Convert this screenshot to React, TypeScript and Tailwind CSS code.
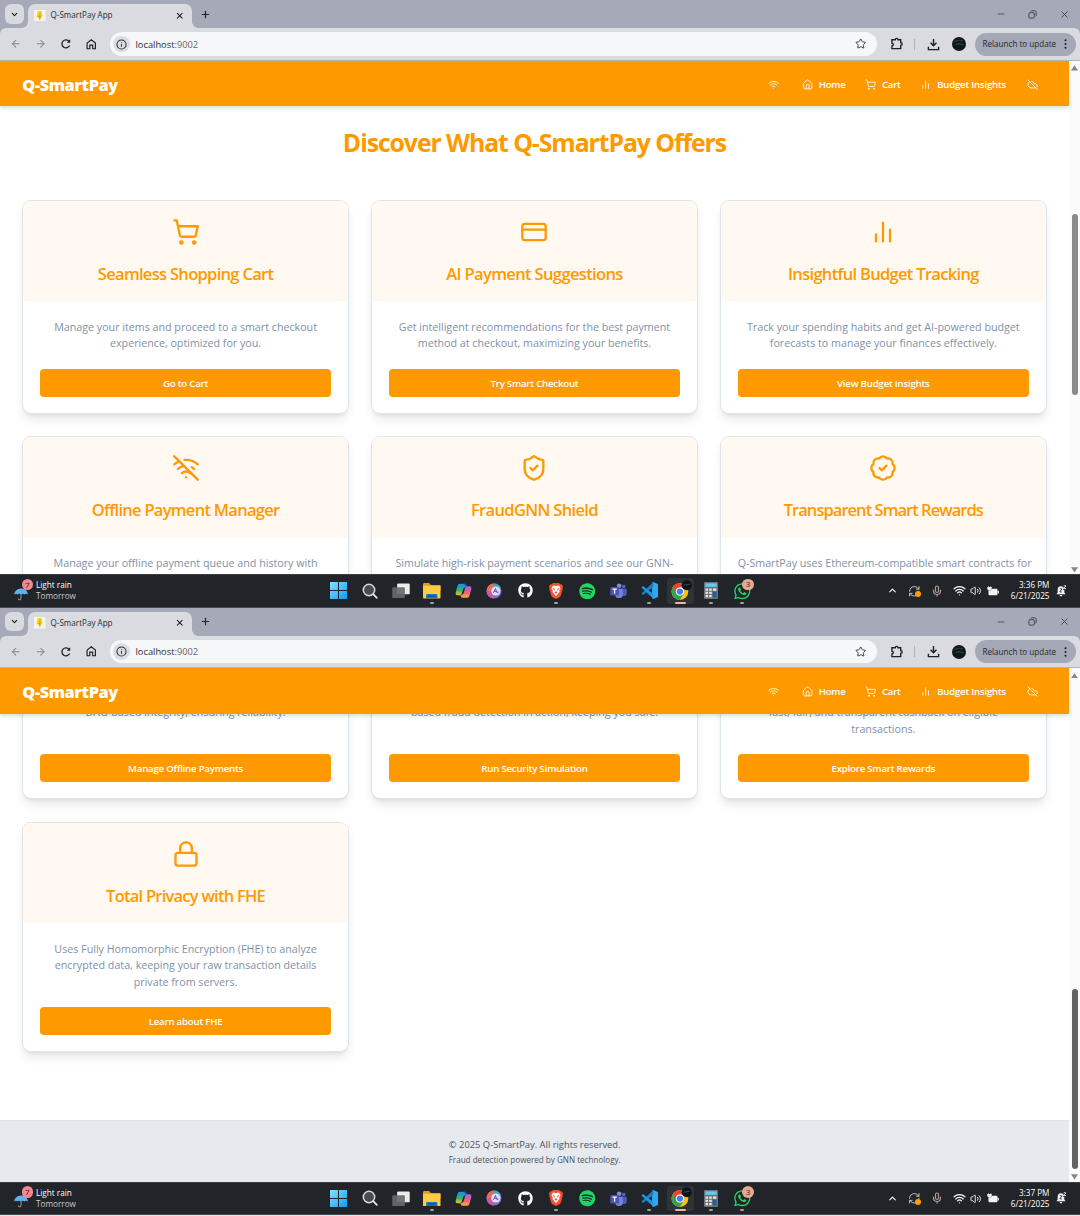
import React from "react";
import {
  ArrowLeft, ArrowRight, BadgeCheck, ChevronDown, ChevronUp, CloudOff, CreditCard, House, Info, Lock,
  Mic, Minus, Plus, RefreshCw, ShieldCheck, ShoppingCart, Star, Volume2, Wifi, WifiOff, X,
} from "lucide-react";
import { FaGithub, FaSpotify, FaWhatsapp } from "react-icons/fa";

type IconProps = { className?: string };

function Bars({ className }: IconProps) {
  return (
    <svg viewBox="0 0 24 24" fill="none" stroke="currentColor" strokeWidth="2" strokeLinecap="round" className={className}>
      <path d="M18 20V10M12 20V4M6 20v-6" />
    </svg>
  );
}

const NAV_ICON = "size-[11.25px] shrink-0 text-[#fff3df]";

function TabStrip() {
  return (
    <div className="flex h-[28px] shrink-0 items-center bg-[#a6a9b7] pl-[4.5px]">
      <div className="flex size-[19.5px] items-center justify-center rounded-[6px] bg-[#d9dae0]">
        <ChevronDown className="size-[9px] text-[#1f2023]" strokeWidth={3} />
      </div>
      <div className="relative ml-[4px] flex h-[24px] w-[163.5px] items-center self-end rounded-t-[7px] bg-[#dadbe1] pb-[1.5px] pl-[6px] pr-[7.5px]">
        <div className="absolute -left-[6px] bottom-0 size-[6px] bg-[radial-gradient(circle_at_0_0,transparent_5.5px,#dadbe1_6px)]" />
        <div className="absolute -right-[6px] bottom-0 size-[6px] bg-[radial-gradient(circle_at_100%_0,transparent_5.5px,#dadbe1_6px)]" />
        <svg viewBox="0 0 12 12" className="size-[11.5px] shrink-0">
          <rect width="12" height="12" fill="#f4f3ee" />
          <path d="M4 1h4.4L8 5.2h1.6L6 10.8 5.8 7.6H2.6z" fill="#f7d514" />
          <path d="M6.2 3v4.4L5.9 10M4 7.2h2" stroke="#b98d08" strokeWidth=".8" fill="none" />
        </svg>
        <span className="ml-[5px] flex-1 whitespace-nowrap text-[8.1px] leading-none text-[#2a2b2e]">Q-SmartPay App</span>
        <X className="size-[9.5px] text-[#1f2023]" strokeWidth={2.8} />
      </div>
      <Plus className="ml-[8.500px] size-[11px] text-[#25262a]" strokeWidth={2.6} />
      <div className="ml-auto flex items-center pr-[10.500px] text-[#45464d]">
        <Minus className="size-[10px]" strokeWidth={2} />
        <svg viewBox="0 0 10 10" className="ml-[22px] size-[9px]" fill="none" stroke="currentColor" strokeWidth="1.1">
          <rect x="1" y="3" width="6" height="6" rx="1.2" />
          <path d="M3 1.6C3.3 1 3.7.9 4.2.9H7.2C8.4.9 9.1 1.6 9.1 2.800V5.700C9.100 6.300 8.900 6.700 8.400 7" />
        </svg>
        <X className="ml-[22px] size-[11px]" strokeWidth={2} />
      </div>
    </div>
  );
}

function Toolbar() {
  return (
    <div className="shrink-0 bg-[#a6a9b7]">
      <div className="flex h-[32.500px] items-center rounded-t-[6px] border-b border-[#b5b7bf] bg-[#dadbe1] pl-[10px] pr-[4.500px] pt-[0.800px]">
        <ArrowLeft className="size-[11.500px] text-[#85868c]" strokeWidth={2.200} />
        <ArrowRight className="ml-[13.500px] size-[11.500px] text-[#85868c]" strokeWidth={2.200} />
        <svg viewBox="0 0 12 12" className="ml-[13.500px] size-[12px] text-[#1d1e21]" fill="none" stroke="currentColor" strokeWidth="1.3">
          <path d="M9.6 7.500A4 4 0 1 1 9.100 3.400" />
          <path d="M10.200 1.300V4.700H6.800z" fill="currentColor" stroke="none" />
        </svg>
        <svg viewBox="0 0 12 12" className="ml-[13px] size-[12.500px] text-[#1d1e21]" fill="none" stroke="currentColor" strokeWidth="1.100">
          <path d="M2 4.900 6 1.700l4 3.200v5.400H7.400V6.900H4.600v3.400H2z" />
        </svg>
        <div className="ml-[12px] flex h-[23.500px] w-[767.500px] items-center rounded-full bg-[#f6f7f9] pl-[3.500px]">
          <div className="flex size-[16.500px] items-center justify-center rounded-full bg-[#dcdde2]">
            <Info className="size-[11px] text-[#2c2d30]" strokeWidth={2.200} />
          </div>
          <span className="ml-[6px] whitespace-nowrap pt-[0.500px] text-[9.300px] leading-none text-[#2d2e31]">
            localhost<span className="text-[#66676b]">:9002</span>
          </span>
          <Star className="ml-auto mr-[11px] size-[11.500px] text-[#3c3d42]" strokeWidth={2} />
        </div>
        <svg viewBox="0 0 14 14" className="ml-[12.500px] size-[13.500px] text-[#1d1e21]" fill="none" stroke="currentColor" strokeWidth="1.400">
          <path d="M2 2.900h3.400c0-1.900 2.900-1.900 2.900 0h2.800v2.900c2 0 2 2.900 0 2.900v3.300H2V9.200c1.900 0 1.900-2.900 0-2.900z" />
        </svg>
        <div className="ml-[11px] h-[11px] w-px bg-[#aeb2c4]" />
        <svg viewBox="0 0 14 14" className="ml-[12px] size-[13px] text-[#1d1e21]" fill="none" stroke="currentColor" strokeWidth="1.500">
          <path d="M7 1v7M3.800 5.200 7 8.400l3.200-3.200M1.500 9.500v3h11v-3" />
        </svg>
        <svg viewBox="0 0 14 14" className="ml-[12px] size-[14px]">
          <circle cx="7" cy="7" r="7" fill="#11161c" />
          <path d="M2.500 7.700q3-2 8.500-.7l1 .8q-5-.8-9.500-.1z" fill="#2e7299" />
          <path d="M2 4.500 7 3l4 1" stroke="#45525f" strokeWidth=".7" fill="none" />
        </svg>
        <div className="ml-[8.500px] flex h-[23px] flex-1 items-center rounded-full bg-[#a5a8b6] pl-[8px] pr-[9px]">
          <span className="whitespace-nowrap text-[8.100px] leading-none text-[#26272b]">Relaunch to update</span>
          <svg viewBox="0 0 3 12" className="ml-auto h-[10px] w-[3px]" fill="#1b1c1f">
            <circle cx="1.500" cy="1.500" r="1.200" /><circle cx="1.500" cy="6" r="1.200" /><circle cx="1.500" cy="10.500" r="1.200" />
          </svg>
        </div>
      </div>
    </div>
  );
}

function SiteHeader() {
  return (
    <header className="relative z-10 flex h-[45.500px] shrink-0 items-center bg-[#ff9900] pb-px pl-[22.300px] pr-[31px] pt-[3px] text-white shadow-[0_2px_4px_rgba(0,0,0,0.14)]">
      <span className="whitespace-nowrap pt-[1.500px] text-[16.300px] font-extrabold leading-none tracking-[-0.024em]">Q-SmartPay</span>
      <nav className="ml-auto flex items-center whitespace-nowrap text-[9.600px] font-semibold leading-none tracking-[-0.02em]">
        <Wifi className={NAV_ICON} />
        <House className={NAV_ICON + " ml-[22.500px]"} />
        <span className="ml-[5.500px] w-[28px] pt-px">Home</span>
        <ShoppingCart className={NAV_ICON + " ml-[18.500px]"} />
        <span className="ml-[5.500px] w-[20px] pt-px">Cart</span>
        <Bars className={NAV_ICON + " ml-[18.500px]"} />
        <span className="ml-[5.500px] w-[71.500px] pt-px">Budget Insights</span>
        <CloudOff className={NAV_ICON + " ml-[18.500px]"} />
      </nav>
    </header>
  );
}

type Feature = { icon: React.ComponentType<any>; title: string; tracking: string; lines: string[]; action: string };

const FEATURES: Feature[] = [
  { icon: ShoppingCart, title: "Seamless Shopping Cart", tracking: "tracking-[-0.042em]", lines: ["Manage your items and proceed to a smart checkout", "experience, optimized for you."], action: "Go to Cart" },
  { icon: CreditCard, title: "AI Payment Suggestions", tracking: "tracking-[-0.038em]", lines: ["Get intelligent recommendations for the best payment", "method at checkout, maximizing your benefits."], action: "Try Smart Checkout" },
  { icon: Bars, title: "Insightful Budget Tracking", tracking: "tracking-[-0.042em]", lines: ["Track your spending habits and get AI-powered budget", "forecasts to manage your finances effectively."], action: "View Budget Insights" },
  { icon: WifiOff, title: "Offline Payment Manager", tracking: "tracking-[-0.043em]", lines: ["Manage your offline payment queue and history with", "DAG-based integrity, ensuring reliability."], action: "Manage Offline Payments" },
  { icon: ShieldCheck, title: "FraudGNN Shield", tracking: "tracking-[-0.040em]", lines: ["Simulate high-risk payment scenarios and see our GNN-", "based fraud detection in action, keeping you safe."], action: "Run Security Simulation" },
  { icon: BadgeCheck, title: "Transparent Smart Rewards", tracking: "tracking-[-0.058em]", lines: ["Q-SmartPay uses Ethereum-compatible smart contracts for", "fast, fair, and transparent cashback on eligible", "transactions."], action: "Explore Smart Rewards" },
  { icon: Lock, title: "Total Privacy with FHE", tracking: "tracking-[-0.046em]", lines: ["Uses Fully Homomorphic Encryption (FHE) to analyze", "encrypted data, keeping your raw transaction details", "private from servers."], action: "Learn about FHE" },
];

function FeatureCard({ icon: Icon, title, tracking, lines, action }: Feature) {
  return (
    <article className="flex flex-col overflow-hidden rounded-[9px] border border-[#dde4ea] bg-white text-center shadow-[0_7px_11px_-2px_rgba(0,0,0,0.1),0_3px_4px_-3px_rgba(0,0,0,0.1)]">
      <div className="flex h-[100.500px] shrink-0 flex-col items-center bg-[#fff9f1] pt-[17px] text-[#ff9900]">
        <Icon className="size-[28px]" />
        <h3 className={"mt-[15.700px] whitespace-nowrap text-[16.500px] font-semibold leading-[24px] " + tracking}>{title}</h3>
      </div>
      <div className="flex flex-1 flex-col px-[16.500px] pb-[16px] pt-[17.200px]">
        <p className="whitespace-nowrap text-[10.700px] leading-[16.900px] text-[#7f91a8]">
          {lines.map((line) => (
            <span key={line} className="block">{line}</span>
          ))}
        </p>
        <button className="mt-auto h-[28px] rounded-[4px] bg-[#ff9900] pt-px text-[9.700px] font-semibold leading-none tracking-[-0.024em] text-white">{action}</button>
      </div>
    </article>
  );
}

function Site({ scrolled }: { scrolled: boolean }) {
  return (
    <div className="flex min-w-0 flex-1 flex-col bg-white">
      <SiteHeader />
      <div className="min-h-0 flex-1 overflow-hidden">
        <div className={scrolled ? "-mt-[475px]" : ""}>
          <main className="pl-[22.400px] pr-[22.900px] pt-[17.900px]">
            <h2 className="text-center text-[24.800px] font-bold leading-[36px] tracking-[-0.043em] text-[#ff9900]">Discover What Q-SmartPay Offers</h2>
            <div className="mt-[40px] grid grid-cols-3 grid-rows-[214px_230.500px_230.500px] gap-[22.500px]">
              {FEATURES.map((f) => <FeatureCard key={f.title} {...f} />)}
            </div>
          </main>
          <footer className="mt-[67.500px] flex h-[63px] flex-col items-center border-t border-[#e0e5ea] bg-[#e6e9ee] pt-[17px] text-[#4a5260]">
            <p className="whitespace-nowrap text-[9.350px] leading-[14px]">© 2025 Q-SmartPay. All rights reserved.</p>
            <p className="mt-[1.500px] whitespace-nowrap text-[8.100px] leading-[13px]">Fraud detection powered by GNN technology.</p>
          </footer>
        </div>
      </div>
    </div>
  );
}

function ScrollBar({ scrolled }: { scrolled: boolean }) {
  return (
    <div className="flex w-[10.600px] shrink-0 flex-col items-center bg-[#fbfbfb] pb-[2px] pt-[4.500px]">
      <svg viewBox="0 0 8 6" className="h-[5.500px] w-[7px]" fill="#858585"><path d="M4 0 8 6H0z" /></svg>
      <div className={scrolled ? "mt-[311px] h-[180px] w-[6px] rounded-full bg-[#636363]" : "mt-[143.500px] h-[181px] w-[6px] rounded-full bg-[#8b8b8b]"} />
      <svg viewBox="0 0 8 6" className="mt-auto h-[5.500px] w-[7px]" fill="#858585"><path d="M4 6 8 0H0z" /></svg>
    </div>
  );
}

function TaskIcon({ children, mark }: { children: React.ReactNode; mark?: "open" | "active" }) {
  return (
    <div className="relative flex h-full w-[31px] items-center justify-center">
      {mark === "active" && <div className="absolute inset-x-[2px] inset-y-[3px] rounded-[3px] bg-[#303336]" />}
      <div className="relative">{children}</div>
      {mark === "open" && <div className="absolute bottom-[3px] h-[2px] w-[4.500px] rounded-full bg-[#a0a1a3]" />}
      {mark === "active" && <div className="absolute bottom-[3px] h-[2px] w-[11px] rounded-full bg-[#f0b39f]" />}
    </div>
  );
}

function TaskIcons() {
  return (
    <div className="absolute inset-y-0 left-[323.500px] flex">
      <TaskIcon>
        <svg viewBox="0 0 17 17" className="-ml-px size-[17px]">
          <defs><linearGradient id="win" x2="1" y2="1"><stop stopColor="#7fe3ff" /><stop offset="1" stopColor="#0f9bf0" /></linearGradient></defs>
          <path d="M0 .5Q0 0 .5 0H8v8H0zM9 0h7.500q.5 0 .5.500V8H9zM0 9h8v8H.5Q0 17 0 16.500zM9 9h8v7.500q0 .5-.5.5H9z" fill="url(#win)" />
        </svg>
      </TaskIcon>
      <TaskIcon>
        <svg viewBox="0 0 16 16" className="size-[16px]"><circle cx="7" cy="7" r="5.700" fill="#4a4b4d" stroke="#d9d9da" strokeWidth="1.500" /><path d="m11.200 11.200 3.600 3.600" stroke="#e5e5e5" strokeWidth="1.800" strokeLinecap="round" /></svg>
      </TaskIcon>
      <TaskIcon>
        <svg viewBox="0 0 18 16" className="h-[15.500px] w-[18px]"><rect x="5" y=".5" width="13" height="11" rx="1" fill="#ececec" /><rect x="0" y="4.500" width="13" height="11" rx="1" fill="#69696b" fillOpacity=".92" /></svg>
      </TaskIcon>
      <TaskIcon mark="open">
        <svg viewBox="0 0 17 15" className="h-[15.500px] w-[17.500px]">
          <path d="M0 1.200Q0 0 1.200 0H6l1.500 2H17v5H0z" fill="#e0a114" />
          <rect y="2.700" width="17" height="12.300" rx="1" fill="#fdcb45" />
          <path d="M3 15v-3q0-1.300 1.300-1.300h8.400Q14 10.700 14 12v3z" fill="#1673c6" /><path d="M5 12.700h7" stroke="#0b4f94" />
        </svg>
      </TaskIcon>
      <TaskIcon>
        <svg viewBox="0 0 18 16" className="h-[15.500px] w-[17px]">
          <defs>
            <linearGradient id="cpa" x2="0" y2="1"><stop stopColor="#168df0" /><stop offset=".6" stopColor="#35b76d" /><stop offset="1" stopColor="#f2c525" /></linearGradient>
            <linearGradient id="cpb" x2="0" y2="1"><stop stopColor="#a465e8" /><stop offset=".5" stopColor="#ed5c84" /><stop offset="1" stopColor="#ffae43" /></linearGradient>
          </defs>
          <path d="M5 .5h5q1.500 0 2 2l.5 1.800H11Q9.300 4.300 8.800 6L7.200 11q-.6 1.700-2.200 1.700H2.800Q0 12.700.8 9.500L2.600 3Q3.300.5 5 .5z" fill="url(#cpa)" />
          <path d="M13 15.500H8q-1.500 0-2-2l-.5-1.200H7q1.700 0 2.200-1.800L10.800 5q.6-1.700 2.200-1.700h2.200q2.800 0 2 3.200L15.400 13q-.7 2.500-2.400 2.500z" fill="url(#cpb)" />
          <path d="M9.500.5h1q1.400 0 1.800 1.800l.5 1H11z" fill="#1c4fd0" />
        </svg>
      </TaskIcon>
      <TaskIcon>
        <svg viewBox="0 0 16 16" className="size-[16px]">
          <circle cx="8" cy="8" r="7.500" fill="#8d6bdc" />
          <path d="M8 .5A7.500 7.500 0 0 0 .5 8L8 8z" fill="#e46f56" /><path d="M.5 8A7.500 7.500 0 0 0 8 15.500V8z" fill="#c95aa8" /><path d="M8 .5A7.500 7.500 0 0 1 15 5.500L8 8z" fill="#42a3b1" />
          <circle cx="9.800" cy="8" r="4.600" fill="#dcdcf3" />
          <path d="M7.400 9.800 9.500 5.500l1 3.700q1.800 1.200 2.200-.5M8 8.300h3.500" fill="none" stroke="#635caf" strokeWidth="1" />
        </svg>
      </TaskIcon>
      <TaskIcon><FaGithub className="size-[15px] text-white" /></TaskIcon>
      <TaskIcon mark="open">
        <svg viewBox="0 0 14 16" className="h-[16px] w-[14px]">
          <path d="M4 0h6l1.500 1.500 1.300-.2L14 3.500l-.5 2 .2.800-2 6.500q-.4 1-1.200 1.500L7 16l-3.500-1.700Q2.700 13.800 2.300 12.800l-2-6.500.2-.8L0 3.500l1.200-2.200 1.300.2z" fill="#f8502c" />
          <path d="m7 3 3-.4 1.500 2.900-1.300 2.200.3 1.300L7 13.200 3.500 9l.3-1.300-1.300-2.200L4 2.600z" fill="#fff" />
          <path d="m3.500 5 2.300.8-.3 2.100zM10.500 5l-2.300.8.3 2.100zM7 8l1.500 1.500L7 10.700 5.500 9.500z" fill="#f8502c" />
        </svg>
      </TaskIcon>
      <TaskIcon><FaSpotify className="size-[16.500px] text-[#1ed760]" /></TaskIcon>
      <TaskIcon>
        <svg viewBox="0 0 17 16" className="h-[15.500px] w-[17px]">
          <circle cx="14" cy="3.700" r="1.800" fill="#5b66c7" /><circle cx="9.200" cy="2.900" r="2.500" fill="#7f88de" />
          <path d="M11 6h6v5q0 2.500-2.500 2.500H11z" fill="#4e59b9" /><path d="M5 6h8v5.500q0 4-4 4t-4-4z" fill="#7780d8" />
          <rect x="0" y="4" width="9" height="9" rx=".8" fill="#4a54b4" /><path d="M2.300 6.300h4.400M4.500 6.300v4.800" stroke="#fff" strokeWidth="1.200" />
        </svg>
      </TaskIcon>
      <TaskIcon mark="open">
        <svg viewBox="0 0 17 17" className="size-[17px]">
          <path d="M12.300 0 17 2v13l-4.700 2L11 16V1z" fill="#2fa8ee" /><path d="M12.300.2V5L2 13 .4 11.600z" fill="#1681cb" /><path d="M12.300 16.800V12L2 4 .4 5.400z" fill="#2196df" />
        </svg>
      </TaskIcon>
      <TaskIcon mark="active">
        <svg viewBox="0 0 21 20" className="-mr-[4px] -mt-[1px] h-[21px] w-[22px]">
          <circle cx="8.500" cy="11" r="8" fill="#fbc116" />
          <path d="M1.600 7A8 8 0 0 0 8.500 19l3.500-6-3.500-2z" fill="#34a350" />
          <path d="M1.600 7A8 8 0 0 1 15.400 7H8.500L5.200 13z" fill="#e94335" />
          <circle cx="8.500" cy="11" r="3.900" fill="#fff" /><circle cx="8.500" cy="11" r="3" fill="#3f80ee" />
          <circle cx="15" cy="5" r="4.800" fill="#0d1318" /><path d="m12 5 6-1" stroke="#285066" strokeWidth="1" />
        </svg>
      </TaskIcon>
      <TaskIcon mark="open">
        <svg viewBox="0 0 14 17" className="h-[17px] w-[14px]">
          <rect width="14" height="17" rx="1" fill="#6b7176" /><rect x="1.300" y="1.300" width="11.400" height="3.500" fill="#5fcdf5" />
          <g fill="#dfe3e6"><path d="M1.500 6.500h2.600v2.200H1.500zM5.200 6.500h2.600v2.200H5.200zM1.500 9.800h2.600V12H1.500zM5.200 9.800h2.600V12H5.200zM1.500 13.100h2.600v2.200H1.500zM5.200 13.100h2.600v2.200H5.200zM9 6.500h3.500v2.200H9z" /></g>
          <path d="M9 9.800h3.500v5.500H9z" fill="#1c5fa8" />
        </svg>
      </TaskIcon>
      <TaskIcon mark="open">
        <FaWhatsapp className="size-[18.500px] text-[#25d366]" />
        <span className="absolute -right-[2.500px] -top-[3px] flex size-[11.500px] items-center justify-center rounded-full bg-[#e9a893] text-[8px] leading-none text-[#2a1f1c]">3</span>
      </TaskIcon>
    </div>
  );
}

function Taskbar({ time }: { time: string }) {
  return (
    <div className="relative flex h-[33.500px] shrink-0 items-center border-b border-t border-b-[#4a4c52] border-t-[#3d3f42] bg-[#212428] pl-[14px] pr-[14px] text-white">
      <div className="relative h-[22px] w-[20px]">
        <svg viewBox="0 0 14 14" className="absolute bottom-[1px] left-0 size-[14px]">
          <path d="M0 7.500Q1 2 7 1.500T14 7.500Q12 6 10.300 7.500 8.700 6 7 7.500 5 6 3.500 7.500 2 6 0 7.500z" fill="#5fb2f0" />
          <path d="M7 7v4.500q-.2 1.500-1.500 1.300T4.600 11.500" fill="none" stroke="#8c8e92" strokeWidth="1.100" />
        </svg>
        <span className="absolute -top-px left-[7.500px] flex size-[11.500px] items-center justify-center rounded-full bg-[#f78790] text-[8px] leading-none text-[#33191b]">7</span>
      </div>
      <div className="ml-[2px] whitespace-nowrap pb-px text-[8.200px] leading-[11.200px]">
        <div>Light rain</div>
        <div className="text-[#c9cacc]">Tomorrow</div>
      </div>
      <TaskIcons />
      <div className="ml-auto flex items-center">
        <ChevronUp className="size-[11px]" strokeWidth={2.400} />
        <div className="relative ml-[10.500px]">
          <RefreshCw className="size-[12.500px] text-[#c9cacc]" strokeWidth={1.800} />
          <div className="absolute bottom-0 right-0 size-[6px] rounded-full bg-[#ff9d0a]" />
        </div>
        <Mic className="ml-[10.500px] size-[12px] text-[#b19a90]" strokeWidth={2.400} />
        <Wifi className="ml-[9.500px] size-[13px]" strokeWidth={2.200} />
        <Volume2 className="ml-[4px] size-[11.500px]" strokeWidth={1.800} />
        <svg viewBox="0 0 13 11" className="ml-[5.500px] h-[10px] w-[12px]" fill="#f1f1f1">
          <rect x="1.500" y="3" width="10" height="7.200" rx="1.400" /><rect x="11.700" y="5.300" width="1.300" height="3" rx=".5" /><path d="M0 1h1V0h1v1h1.500V0h1v1h.8v2Q5 5 2.700 5 0 5 0 3z" stroke="#212428" strokeWidth=".3" />
        </svg>
        <div className="ml-[10px] w-[41px] whitespace-nowrap pb-px text-right text-[8.200px] leading-[11px]">
          <div>{time}</div>
          <div>6/21/2025</div>
        </div>
        <svg viewBox="0 0 11 12" className="ml-[6px] h-[12px] w-[10.500px]">
          <path d="M5 1q3.700 0 3.700 4v2.500L10 9.500H.5l1.200-2V5Q1.700 1 5 1zM3.700 10.200h3Q6.500 11.700 5.200 11.700T3.700 10.200z" fill="#f1f1f1" />
          <path d="M4 3.700h2.200L4 7h2.200M7.500 1.500h2.500L7.600 4.500h2.600" fill="none" stroke="#212428" strokeWidth=".8" /><path d="M8 .5h2.500L8 3.500h2.500" fill="none" stroke="#fff" strokeWidth=".8" />
        </svg>
      </div>
    </div>
  );
}

function BrowserWindow({ scrolled, time }: { scrolled: boolean; time: string }) {
  return (
    <section className="flex h-[607.500px] flex-col overflow-hidden">
      <TabStrip />
      <Toolbar />
      <div className="flex min-h-0 flex-1">
        <Site scrolled={scrolled} />
        <ScrollBar scrolled={scrolled} />
      </div>
      <Taskbar time={time} />
    </section>
  );
}

export default function App() {
  return (
    <div className="h-[1216px] w-[1080px] overflow-hidden bg-[#e4e5e8] font-['Open_Sans',sans-serif]">
      <BrowserWindow scrolled={false} time="3:36 PM" />
      <BrowserWindow scrolled time="3:37 PM" />
    </div>
  );
}
